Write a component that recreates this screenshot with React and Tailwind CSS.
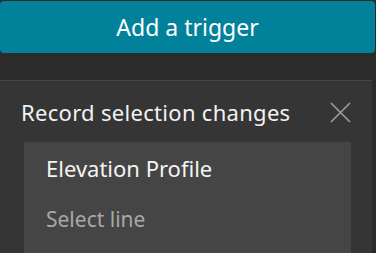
import React from "react";

export default function App() {
  const font = { fontFamily: "'Noto Sans', sans-serif" };
  return (
    <div className="w-[376px] h-[253px] bg-[#2b2b2b] overflow-hidden flex flex-col" style={font}>
      <div className="pt-px">
        <button className="w-[375px] h-[52px] rounded-[4px] bg-[#02819a] text-white text-[23px] flex items-center justify-center" style={font}>
          Add a trigger
        </button>
      </div>
      <div className="mt-[27px] w-[373px] flex-1 bg-[#353535] border-t border-[#454545] border-r border-r-[#2a2a2a] flex flex-col">
        <div className="h-[61px] flex items-center justify-between pl-[21px] pr-[21px]">
          <span className="text-[#f2f2f2] text-[22px] tracking-[0.3px] leading-[30px]">Record selection changes</span>
          <svg width="21" height="21" viewBox="0 0 21 21" className="mt-[2px]">
            <path d="M1 1 L20 20 M20 1 L1 20" stroke="#9e9e9e" strokeWidth="1.6" fill="none" />
          </svg>
        </div>
        <div className="ml-[24px] w-[327px] flex-1 bg-[#454545] flex flex-col pl-[22px]">
          <div className="text-[#f4f4f4] text-[22px] mt-[11px] leading-[30px]">Elevation Profile</div>
          <div className="text-[#a8a8a8] text-[21px] mt-[22px] leading-[28px]">Select line</div>
        </div>
      </div>
    </div>
  );
}
